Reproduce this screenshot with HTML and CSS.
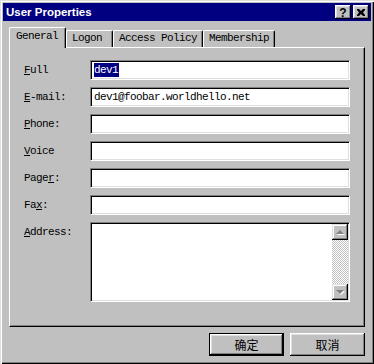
FILE: index.html
```html
<!DOCTYPE html>
<html lang="zh-CN">

<head>
    <meta charset="UTF-8">
    <title>User Properties</title>
    <link rel="stylesheet" href="styles.css">
</head>

<body>
    <div class="window">
        <div class="titlebar">
            <span class="title">User Properties</span>
            <div class="title-buttons">
                <div class="tbtn help">?</div>
                <div class="tbtn">
                    <svg width="8" height="7" viewBox="0 0 8 7">
                        <path d="M0 0h2l2 2 2-2h2v1L6 3.5 8 6v1H6L4 5 2 7H0V6l2-2.5L0 1z" fill="#000"/>
                    </svg>
                </div>
            </div>
        </div>

        <div class="tabs">
            <div class="tab active">General</div>
            <div class="tab logon">Logon</div>
            <div class="tab">Access Policy</div>
            <div class="tab">Membership</div>
        </div>

        <div class="panel">
            <div class="label"><u>F</u>ull</div>
            <div class="field"><span class="selected">dev1</span></div>

            <div class="label"><u>E</u>-mail:</div>
            <div class="field">dev1@foobar.worldhello.net</div>

            <div class="label"><u>P</u>hone:</div>
            <div class="field"></div>

            <div class="label"><u>V</u>oice</div>
            <div class="field"></div>

            <div class="label">Page<u>r</u>:</div>
            <div class="field"></div>

            <div class="label">Fa<u>x</u>:</div>
            <div class="field"></div>

            <div class="label top"><u>A</u>ddress:</div>
            <div class="field area">
                <div class="scrollbar">
                    <div class="arrow up"></div>
                    <div class="track"></div>
                    <div class="arrow down"></div>
                </div>
            </div>
        </div>

        <div class="actions">
            <div class="btn default"><span>确定</span></div>
            <div class="btn"><span>取消</span></div>
        </div>
    </div>
</body>

</html>
```

FILE: styles.css
```css
body {
    margin: 0;
    padding: 0;
    background-color: #c0c0c0;
    font-family: 'Liberation Mono', 'Noto Sans CJK SC', monospace;
    font-size: 11px;
    letter-spacing: -0.6px;
    color: #000;
}

.window {
    box-sizing: border-box;
    width: 374px;
    height: 364px;
    padding: 3px;
    background-color: #c0c0c0;
    box-shadow: inset 1px 1px #dfdfdf, inset 2px 2px #fff, inset -1px -1px #000, inset -2px -2px #808080;
}

.titlebar {
    display: flex;
    align-items: center;
    justify-content: space-between;
    height: 18px;
    background-color: #000080;
    color: #fff;
    padding: 0 2px 0 3px;
}

.title {
    font-family: 'Liberation Sans', Arial, sans-serif;
    font-weight: bold;
    font-size: 11.5px;
    letter-spacing: 0;
}

.title-buttons {
    display: flex;
    gap: 2px;
}

.tbtn {
    box-sizing: border-box;
    width: 16px;
    height: 14px;
    display: flex;
    align-items: center;
    justify-content: center;
    background-color: #c0c0c0;
    color: #000;
    box-shadow: inset -1px -1px #000, inset 1px 1px #fff, inset -2px -2px #808080, inset 2px 2px #dfdfdf;
}

.tbtn.help {
    font-family: 'Liberation Sans', Arial, sans-serif;
    font-weight: bold;
    font-size: 12px;
    letter-spacing: 0;
    padding-top: 1px;
}

.tabs {
    display: flex;
    align-items: flex-end;
    height: 20px;
    margin: 6px 0 0 6px;
}

.tab {
    box-sizing: border-box;
    height: 17px;
    padding: 0 5px;
    line-height: 15px;
    border: 1px solid;
    border-color: #fff #000 transparent #fff;
    border-bottom: none;
    border-radius: 2px 2px 0 0;
    box-shadow: inset -1px 0 #808080;
}

.tab.logon {
    padding-right: 10px;
}

.tab.active {
    position: relative;
    z-index: 1;
    height: 21px;
    margin-bottom: -1px;
    padding: 0 7px 0 6px;
    line-height: 16px;
    background-color: #c0c0c0;
}

.panel {
    box-sizing: border-box;
    width: 356px;
    height: 280px;
    margin-left: 6px;
    padding: 12px 14px 0 14px;
    border: 1px solid;
    border-color: #fff #000 #000 #fff;
    box-shadow: inset -1px -1px #808080;
    display: grid;
    grid-template-columns: 66px 260px;
    grid-template-rows: repeat(6, 20px) 80px;
    row-gap: 7px;
    align-items: center;
}

.label.top {
    align-self: start;
    padding-top: 4px;
}

.field {
    box-sizing: border-box;
    height: 20px;
    padding: 0 3px;
    line-height: 18px;
    background-color: #fff;
    border: 1px solid;
    border-color: #808080 #fff #fff #808080;
    box-shadow: inset 1px 1px #000, inset -1px -1px #dfdfdf;
}

.selected {
    display: inline-block;
    background-color: #000080;
    color: #fff;
    line-height: 14px;
    padding-right: 1px;
}

.field.area {
    height: 80px;
    padding: 1px 1px 1px 0;
    display: flex;
    justify-content: flex-end;
}

.scrollbar {
    width: 16px;
    display: flex;
    flex-direction: column;
}

.track {
    flex: 1;
    background-color: #c0c0c0;
    background-image: conic-gradient(#fff 25%, transparent 0 50%, #fff 0 75%, transparent 0);
    background-size: 2px 2px;
}

.arrow {
    height: 16px;
    display: flex;
    align-items: center;
    justify-content: center;
    background-color: #c0c0c0;
    box-shadow: inset -1px -1px #000, inset 1px 1px #dfdfdf, inset -2px -2px #808080, inset 2px 2px #fff;
}

.arrow::after {
    content: '';
    width: 0;
    height: 0;
    border-left: 4px solid transparent;
    border-right: 4px solid transparent;
}

.arrow.up::after {
    border-bottom: 4px solid #808080;
    filter: drop-shadow(1px 1px 0 #fff);
}

.arrow.down::after {
    border-top: 4px solid #808080;
    filter: drop-shadow(1px 1px 0 #fff);
}

.actions {
    display: flex;
    justify-content: flex-end;
    gap: 6px;
    width: 356px;
    margin: 6px 0 0 6px;
}

.btn {
    box-sizing: border-box;
    width: 75px;
    height: 23px;
    display: flex;
    align-items: center;
    justify-content: center;
    font-family: 'Noto Sans CJK SC', sans-serif;
    font-size: 12px;
    letter-spacing: 0;
    background-color: #c0c0c0;
    box-shadow: inset -1px -1px #000, inset 1px 1px #fff, inset -2px -2px #808080, inset 2px 2px #dfdfdf;
}

.btn.default {
    border: 1px solid #000;
    box-shadow: inset -1px -1px #000, inset 1px 1px #fff, inset -2px -2px #808080, inset 2px 2px #dfdfdf;
}
```
